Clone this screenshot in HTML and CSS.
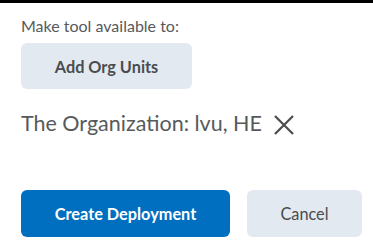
FILE: index.html
```html
<!DOCTYPE html>
<html>
<head>
  <title>Create Deployment</title>
  <link rel="stylesheet" href="styles.css">
</head>
<body>
  <div class="topbar"></div>
  <div class="panel">
    <label class="field-label">Make tool available to:</label>
    <button class="btn btn-secondary btn-add">Add Org Units</button>

    <div class="org-item">
      <span>The Organization: lvu, HE</span>
      <svg class="remove" width="22" height="22" viewBox="0 0 22 22">
        <path d="M2 2 L20 20 M20 2 L2 20" stroke="#494c4e" stroke-width="2.2" fill="none"/>
      </svg>
    </div>

    <div class="actions">
      <button class="btn btn-primary btn-create">Create Deployment</button>
      <button class="btn btn-secondary btn-cancel">Cancel</button>
    </div>
  </div>
</body>
</html>
```

FILE: styles.css
```css
body {
  margin: 0;
  font-family: Lato, "Noto Sans", sans-serif;
  background: #fff;
  color: #494c4e;
}
.topbar {
  height: 3px;
  background: #000;
}
.panel {
  padding: 13px 0 0 21px;
}
.field-label {
  display: block;
  font-size: 16px;
  line-height: 20px;
  color: #565a5c;
  margin-bottom: 7px;
}
.btn {
  font-family: inherit;
  font-size: 16.3px;
  font-weight: 700;
  border: none;
  border-radius: 6px;
  cursor: pointer;
  flex-shrink: 0;
}
.btn-secondary {
  background: #e3e9f1;
  color: #494c4e;
}
.btn-primary {
  background: #006fbf;
  color: #fff;
}
.btn-add {
  width: 171px;
  height: 46px;
}
.org-item {
  display: flex;
  align-items: center;
  gap: 11px;
  margin-top: 21px;
  font-size: 21.5px;
  line-height: 26px;
  color: #565a5c;
}
.remove {
  margin-top: 4px;
}
.actions {
  display: flex;
  gap: 17px;
  margin-top: 54px;
}
.btn-create {
  width: 209px;
  height: 47px;
}
.btn-cancel {
  width: 115px;
  height: 47px;
  font-weight: 400;
}
```
